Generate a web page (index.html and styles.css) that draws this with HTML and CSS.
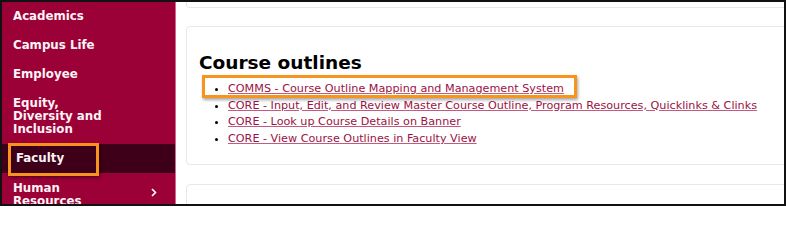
FILE: index.html
```html
<!DOCTYPE html>
<html lang="en">
<head>
<meta charset="utf-8">
<title>Course outlines</title>
<link rel="stylesheet" href="styles.css">
</head>
<body>
<div class="frame">
  <nav class="sidebar">
    <div class="nav-item">Academics</div>
    <div class="nav-item">Campus Life</div>
    <div class="nav-item">Employee</div>
    <div class="nav-item">Equity,<br>Diversity and<br>Inclusion</div>
    <div class="nav-item active"><span>Faculty</span><span class="callout callout-nav"></span></div>
    <div class="nav-item has-sub"><span>Human<br>Resources</span>
      <svg class="chev" width="6" height="9" viewBox="0 0 6 9"><polyline points="1,1 4.5,4.5 1,8" fill="none" stroke="#fff" stroke-width="1.6"/></svg>
    </div>
  </nav>
  <main class="main">
    <section class="card card-top"></section>
    <section class="card card-main">
      <h2 class="title">Course outlines</h2>
      <ul class="links">
        <li class="hl"><a href="#">COMMS - Course Outline Mapping and Management System</a><span class="callout callout-link"></span></li>
        <li><a href="#">CORE - Input, Edit, and Review Master Course Outline, Program Resources, Quicklinks &amp; Clinks</a></li>
        <li><a href="#">CORE - Look up Course Details on Banner</a></li>
        <li><a href="#">CORE - View Course Outlines in Faculty View</a></li>
      </ul>
    </section>
    <section class="card card-bottom"></section>
  </main>
</div>
</body>
</html>
```

FILE: styles.css
```css
html, body {
  margin: 0;
  padding: 0;
  background: #fff;
}

.frame {
  width: 786px;
  height: 206px;
  box-sizing: border-box;
  border: 2px solid #111;
  display: flex;
  overflow: hidden;
  font-family: "DejaVu Sans", Verdana, sans-serif;
}

.sidebar {
  width: 173px;
  flex-shrink: 0;
  background: #9b0037;
  border-right: 1px solid #cf6a8d;
  color: #fbf4f6;
}

.nav-item {
  position: relative;
  padding: 8px 18px 8px 11px;
  font-size: 11.8px;
  font-weight: bold;
  line-height: 13px;
}

.nav-item.active {
  background: #3e0018;
  padding-left: 14px;
}

.nav-item.has-sub {
  display: flex;
  justify-content: space-between;
  align-items: flex-start;
  padding-top: 9px;
}

.chev {
  margin-top: 6px;
}

.callout {
  position: absolute;
  box-sizing: border-box;
  border: 3px solid #f7941d;
  box-shadow: 1px 2px 3px rgba(0, 0, 0, 0.35);
  pointer-events: none;
}

.callout-nav {
  left: 6px;
  top: -1px;
  width: 91px;
  height: 33px;
}

.main {
  flex: 1;
  min-width: 0;
  display: flex;
  flex-direction: column;
  padding-left: 10px;
  background: #fff;
}

.card {
  width: 700px;
  flex-shrink: 0;
  box-sizing: border-box;
  border: 1px solid #e4e9f1;
  border-radius: 4px;
  background: #fff;
}

.card-top {
  height: 6px;
  border-top: none;
  border-radius: 0 0 4px 4px;
}

.card-main {
  margin-top: 18px;
  padding: 25px 12px 16px 12px;
}

.card-bottom {
  margin-top: 19px;
  height: 40px;
}

.title {
  margin: 0;
  font-size: 18.5px;
  line-height: 22px;
  font-weight: bold;
  color: #000;
}

.links {
  margin: 7px 0 0 0;
  padding-left: 29px;
  font-size: 11.2px;
  line-height: 16.7px;
  color: #000;
}

.links li {
  position: relative;
}

.links a {
  color: #9a1343;
  text-decoration: underline;
  text-decoration-color: #c45a80;
}

.callout-link {
  left: -26px;
  top: -6px;
  width: 375px;
  height: 23px;
}
```
